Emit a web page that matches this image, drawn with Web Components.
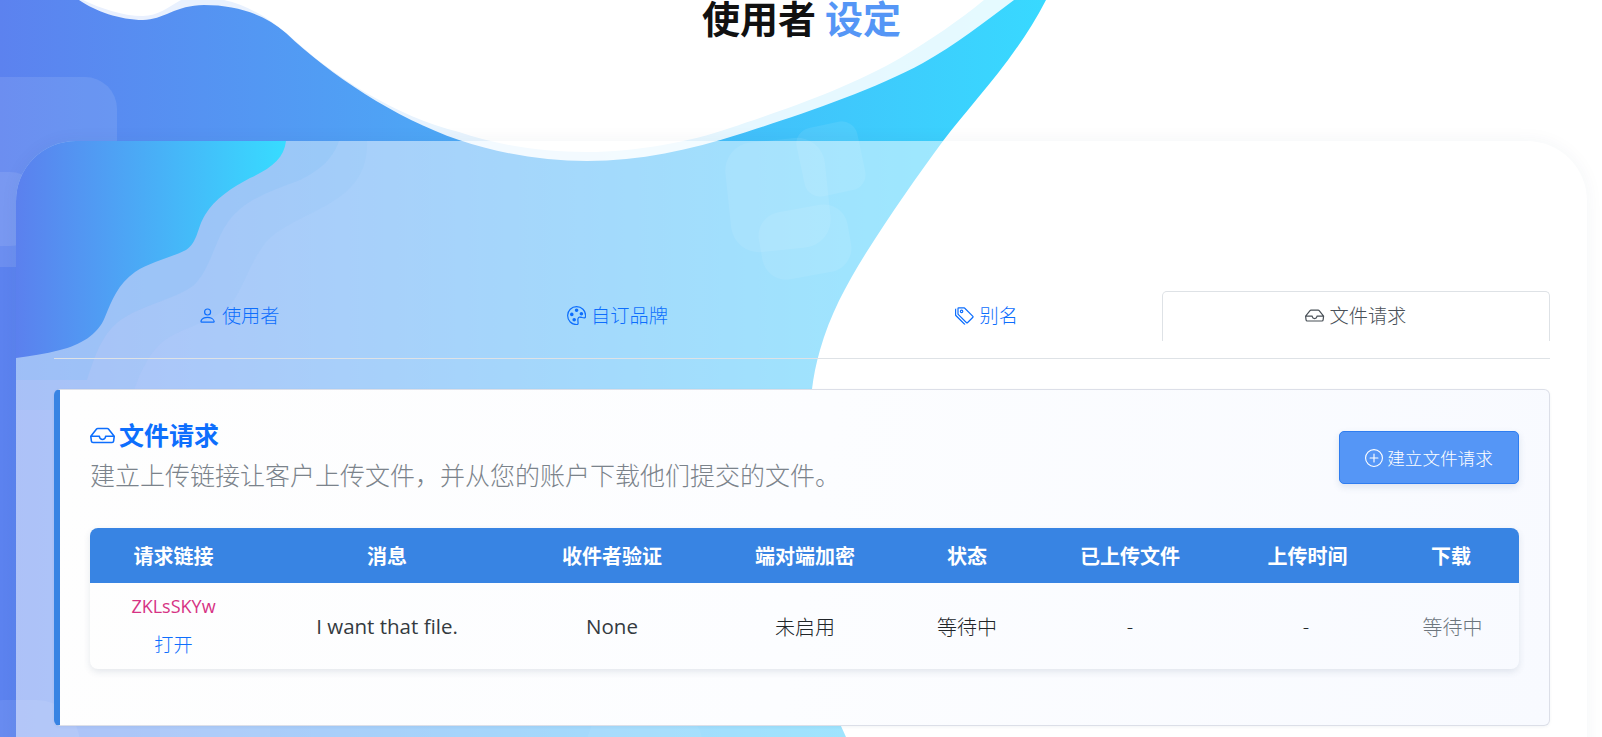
<!DOCTYPE html>
<html lang="zh-CN">
<head>
<meta charset="utf-8">
<title>使用者设定</title>
<style>
html,body{margin:0;height:737px;overflow:hidden;background:#fff}
body{font-family:"Open Sans","Noto Sans CJK SC",sans-serif;color:#212529;position:relative}
</style>
</head>
<body>
<bg-art></bg-art>
<settings-page>
  <page-title slot="title"><span>使用者</span> <em>设定</em></page-title>
  <settings-card>
    <nav-tabs>
      <tab-item icon="person">使用者</tab-item>
      <tab-item icon="palette">自订品牌</tab-item>
      <tab-item icon="tags">别名</tab-item>
      <tab-item icon="inbox" active>文件请求</tab-item>
    </nav-tabs>
    <request-panel>
      <span slot="title">文件请求</span>
      <span slot="desc">建立上传链接让客户上传文件，并从您的账户下载他们提交的文件。</span>
      <action-button slot="action" icon="plus">建立文件请求</action-button>
      <file-table slot="table"></file-table>
    </request-panel>
  </settings-card>
</settings-page>

<script>
const ICONS = {
  person:'<path d="M8 8a3 3 0 1 0 0-6 3 3 0 0 0 0 6Zm2-3a2 2 0 1 1-4 0 2 2 0 0 1 4 0Zm4 8c0 1-1 1-1 1H3s-1 0-1-1 1-4 6-4 6 4 6 4Zm-1-.004c-.001-.246-.154-.986-.832-1.664C11.516 10.68 10.289 10 8 10c-2.29 0-3.516.68-4.168 1.332-.678.678-.83 1.418-.832 1.664h10Z"/>',
  palette:'<path d="M8 5a1.5 1.5 0 1 0 0-3 1.5 1.5 0 0 0 0 3zm4 3a1.5 1.5 0 1 0 0-3 1.5 1.5 0 0 0 0 3zM5.5 7a1.5 1.5 0 1 1-3 0 1.5 1.5 0 0 1 3 0zm.5 6a1.5 1.5 0 1 0 0-3 1.5 1.5 0 0 0 0 3z"/><path d="M16 8c0 3.15-1.866 2.585-3.567 2.07C11.42 9.763 10.465 9.473 10 10c-.603.683-.475 1.819-.351 2.92C9.826 14.495 9.996 16 8 16a8 8 0 1 1 8-8zm-8 7c.611 0 .654-.171.655-.176.078-.146.124-.464.07-1.119-.014-.168-.037-.37-.061-.591-.052-.464-.112-1.005-.118-1.462-.01-.707.083-1.61.704-2.314.369-.417.845-.578 1.272-.618.404-.038.812.026 1.16.104.343.077.702.186 1.025.284l.028.008c.346.105.658.199.953.266.653.148.904.083.991.024C14.717 9.38 15 9.161 15 8a7 7 0 1 0-7 7z"/>',
  tags:'<path d="M3 2v4.586l7 7L14.586 9l-7-7H3zM2 2a1 1 0 0 1 1-1h4.586a1 1 0 0 1 .707.293l7 7a1 1 0 0 1 0 1.414l-4.586 4.586a1 1 0 0 1-1.414 0l-7-7A1 1 0 0 1 2 6.586V2z"/><path d="M5.5 5a.5.5 0 1 1 0-1 .5.5 0 0 1 0 1zm0 1a1.5 1.5 0 1 0 0-3 1.5 1.5 0 0 0 0 3zM1 7.086a1 1 0 0 0 .293.707L8.75 15.25l-.043.043a1 1 0 0 1-1.414 0l-7-7A1 1 0 0 1 0 7.586V3a1 1 0 0 1 1-1v5.086z"/>',
  inbox:'<path d="M4.98 4a.5.5 0 0 0-.39.188L1.54 8H6a.5.5 0 0 1 .5.5 1.5 1.5 0 1 0 3 0A.5.5 0 0 1 10 8h4.46l-3.05-3.812A.5.5 0 0 0 11.02 4H4.98zm9.954 5H10.45a2.5 2.5 0 0 1-4.9 0H1.066l.32 2.562a.5.5 0 0 0 .497.438h12.234a.5.5 0 0 0 .496-.438L14.933 9zM3.809 3.563A1.5 1.5 0 0 1 4.981 3h6.038a1.5 1.5 0 0 1 1.172.563l3.7 4.625a.5.5 0 0 1 .105.374l-.39 3.124A1.5 1.5 0 0 1 14.117 13H1.883a1.5 1.5 0 0 1-1.489-1.314l-.39-3.124a.5.5 0 0 1 .106-.374l3.7-4.625z"/>',
  plus:'<path d="M8 15A7 7 0 1 1 8 1a7 7 0 0 1 0 14zm0 1A8 8 0 1 0 8 0a8 8 0 0 0 0 16z"/><path d="M8 4a.5.5 0 0 1 .5.5v3h3a.5.5 0 0 1 0 1h-3v3a.5.5 0 0 1-1 0v-3h-3a.5.5 0 0 1 0-1h3v-3A.5.5 0 0 1 8 4z"/>'
};
const icon = (n,s) => `<svg width="${s}" height="${s}" viewBox="0 0 16 16" fill="currentColor" aria-hidden="true" style="flex:none;display:block">${ICONS[n]}</svg>`;
const EDGE='M1046 0C1015 60 970 105 943 141C918 175 890 215 866 253C846 285 830 315 820 350C812 378 810 400 810 430C808 520 800 640 846 737L0 737L0 0Z';

class Base extends HTMLElement{
  constructor(){super();this.attachShadow({mode:'open'});}
}
customElements.define('bg-art',class extends Base{connectedCallback(){this.shadowRoot.innerHTML=`
<style>:host{position:absolute;left:0;top:0;width:1602px;height:737px;z-index:0;pointer-events:none}svg{display:block}</style>
<svg width="1602" height="737" viewBox="0 0 1602 737">
 <defs>
  <linearGradient id="g" gradientUnits="userSpaceOnUse" x1="0" y1="0" x2="1046" y2="0"><stop offset="0" stop-color="#5c82ef"/><stop offset="1" stop-color="#38d9ff"/></linearGradient>
  <clipPath id="c"><path d="${EDGE}"/></clipPath>
 </defs>
 <path fill="url(#g)" d="${EDGE}"/>
 <g clip-path="url(#c)" fill="#fff">
  <rect x="-60" y="77" width="177" height="190" rx="32" opacity=".1"/>
  <rect x="-70" y="172" width="110" height="74" rx="30" opacity=".09"/>
  <rect x="-40" y="700" width="120" height="90" rx="44" opacity=".08"/>
  <rect x="800" y="124" width="62" height="70" rx="16" opacity=".08" transform="rotate(-12 831 159)"/>
  <rect x="728" y="140" width="100" height="110" rx="28" opacity=".08" transform="rotate(-6 778 195)"/>
  <rect x="760" y="208" width="90" height="68" rx="24" opacity=".08" transform="rotate(-10 805 242)"/>
  <rect x="160" y="700" width="110" height="80" rx="24" opacity=".05"/>
  <rect x="590" y="705" width="110" height="80" rx="24" opacity=".05" transform="rotate(20 645 740)"/>
 </g>
 <path fill="#fff" opacity=".87" d="M79 0C95 11 120 20 143 20C163 20 176 5 204 5C238 5 265 15 286 33C330 75 395 118 459 140C500 154 545 161 587 161C640 161 690 150 740 134C790 118 870 92 923 63C955 45 985 22 1014 0Z"/>
 <path fill="#fff" d="M83 0C100 8 122 16 143 16C158 16 168 7 181 0ZM224 0C248 5 272 20 291 37C333 76 395 116 459 132C500 146 545 152 587 152C635 152 690 142 730 128C775 113 850 88 902 57C930 40 960 20 984 0Z"/>
</svg>`;}});

customElements.define('settings-page',class extends Base{connectedCallback(){this.shadowRoot.innerHTML=`
<style>:host{display:block;position:relative;z-index:1;height:737px;overflow:hidden}
header{height:141px;display:block}</style>
<header><slot name="title"></slot></header><slot></slot>`;}});

customElements.define('page-title',class extends Base{connectedCallback(){this.shadowRoot.innerHTML=`
<style>:host{display:block;text-align:center;font-family:"Liberation Sans","Noto Sans CJK SC",sans-serif;font-size:38px;font-weight:700;line-height:40px;color:#111;padding-left:1px;word-spacing:-1.5px}
::slotted(em){font-style:normal;color:#5596f6}</style><slot></slot>`;}});

customElements.define('settings-card',class extends Base{connectedCallback(){this.shadowRoot.innerHTML=`
<style>:host{display:block;position:relative;margin:0 15px 0 16px;border-radius:60px 60px 0 0;height:700px;box-sizing:border-box;padding:150px 37px 0 38px;background:rgba(255,255,255,.5);box-shadow:0 0 18px rgba(30,50,90,.05)}
.waves{position:absolute;left:0;top:0;width:100%;height:100%;border-radius:inherit;overflow:hidden;pointer-events:none}
.waves svg{position:absolute;left:-16px;top:-141px;display:block}
.body{position:relative}</style>
<div class="waves"><svg width="1602" height="737" viewBox="0 0 1602 737">
 <defs><linearGradient id="b" gradientUnits="userSpaceOnUse" x1="16" y1="0" x2="286" y2="0"><stop offset="0" stop-color="#5b80ee"/><stop offset="1" stop-color="#37dcff"/></linearGradient></defs>
 <path fill="#7fc0f6" opacity=".09" d="M367 141C368 165 358 185 338 198C315 214 288 222 270 238C252 256 245 285 232 303C215 322 185 326 165 340C145 355 135 385 128 410L0 410L0 141Z"/>
 <path fill="#58b4f4" opacity=".12" d="M339 141C332 160 320 170 300 180C275 190 245 198 228 222C215 240 210 270 194 285C175 300 140 305 118 322C102 335 95 355 87 380L0 380L0 141Z"/>
 <path fill="url(#b)" d="M286 141C284 158 272 168 250 178C232 188 215 198 205 215C197 228 198 242 186 250C170 258 150 262 135 272C118 284 112 300 105 317C98 335 80 345 60 350C45 354 30 356 16 358L0 358L0 141Z"/>
</svg></div>
<div class="body"><slot></slot></div>`;}});

customElements.define('nav-tabs',class extends Base{connectedCallback(){this.shadowRoot.innerHTML=`
<style>:host{display:flex;height:67px;border-bottom:1px solid #dee2e6;margin-bottom:30px}</style><slot></slot>`;}});

customElements.define('tab-item',class extends Base{connectedCallback(){const a=this.hasAttribute('active');this.shadowRoot.innerHTML=`
<style>:host{flex:1 1 auto;display:block;font-size:19.2px;line-height:26px;font-weight:300}
.l{height:50px;box-sizing:border-box;display:flex;align-items:center;justify-content:center;gap:5px;color:${a?'#495057':'#0d6efd'};border:1px solid ${a?'#dee2e6':'transparent'};border-bottom:0;border-radius:5px 5px 0 0;padding:0 0 2px}
</style><div class="l">${icon(this.getAttribute('icon'),19.2)}<span><slot></slot></span></div>`;}});

customElements.define('request-panel',class extends Base{connectedCallback(){this.shadowRoot.innerHTML=`
<style>:host{display:block;box-sizing:border-box;height:337px;border:1px solid #dcdfe8;border-left:6px solid #3884e3;border-radius:6px;background:linear-gradient(100deg,#fefefe 0%,#fcfdff 50%,#f8faff 100%);padding:24px 30px 0 30px;box-shadow:0 1px 3px rgba(40,60,100,.06)}
.head{display:flex;justify-content:space-between;align-items:center;height:87px;margin-bottom:27px}
.txt{align-self:flex-start}
.t{display:flex;align-items:center;gap:4px;font-size:25px;font-weight:700;line-height:36px;color:#0d6efd;margin-top:3px}
.d{font-size:25px;font-weight:300;line-height:38px;color:#7b838b;margin-top:3px}
</style>
<div class="head"><div class="txt"><div class="t">${icon('inbox',25)}<slot name="title"></slot></div><div class="d"><slot name="desc"></slot></div></div><slot name="action"></slot></div>
<slot name="table"></slot>`;}});

customElements.define('action-button',class extends Base{connectedCallback(){this.shadowRoot.innerHTML=`
<style>:host{display:flex;align-items:center;justify-content:center;gap:4px;box-sizing:border-box;width:180px;height:53px;background:#5596f6;border:1px solid #2f7df0;border-radius:5px;color:#fff;font-size:17.6px;font-weight:300;box-shadow:0 3px 7px rgba(60,90,140,.14)}</style>
${icon(this.getAttribute('icon'),18)}<span><slot></slot></span>`;}});

customElements.define('file-table',class extends Base{connectedCallback(){
const H=['请求链接','消息','收件者验证','端对端加密','状态','已上传文件','上传时间','下载'];
this.shadowRoot.innerHTML=`
<style>:host{display:grid;grid-template-columns:167px 260px 190px 196px 128px 198px 154px 136px;width:1429px;border-radius:8px;overflow:hidden;font-size:20px;box-shadow:0 3px 7px rgba(50,70,110,.12);color:#212529}
.h{background:#3884e3;color:#fff;font-weight:700;height:55px;display:flex;align-items:center;justify-content:center;padding-bottom:1px;box-sizing:border-box}
.h:nth-child(8),.m{padding-left:3px}
.c{height:86px;display:flex;flex-direction:column;align-items:center;justify-content:center;box-sizing:border-box;font-weight:300}
.k{line-height:39px;color:#d63384;font-size:18px;font-weight:400;margin-top:-1px}.o{line-height:38px;color:#0d6efd;font-size:19.2px}.m{color:#6c757d}.la{font-size:20.5px;font-weight:400;color:#343a40}
</style>
${H.map(t=>`<div class="h">${t}</div>`).join('')}
<div class="c"><span class="k">ZKLsSKYw</span><span class="o">打开</span></div>
<div class="c la">I want that file.</div><div class="c la">None</div><div class="c">未启用</div><div class="c">等待中</div><div class="c">-</div><div class="c">-</div><div class="c m">等待中</div>`;}});
</script>
</body>
</html>
